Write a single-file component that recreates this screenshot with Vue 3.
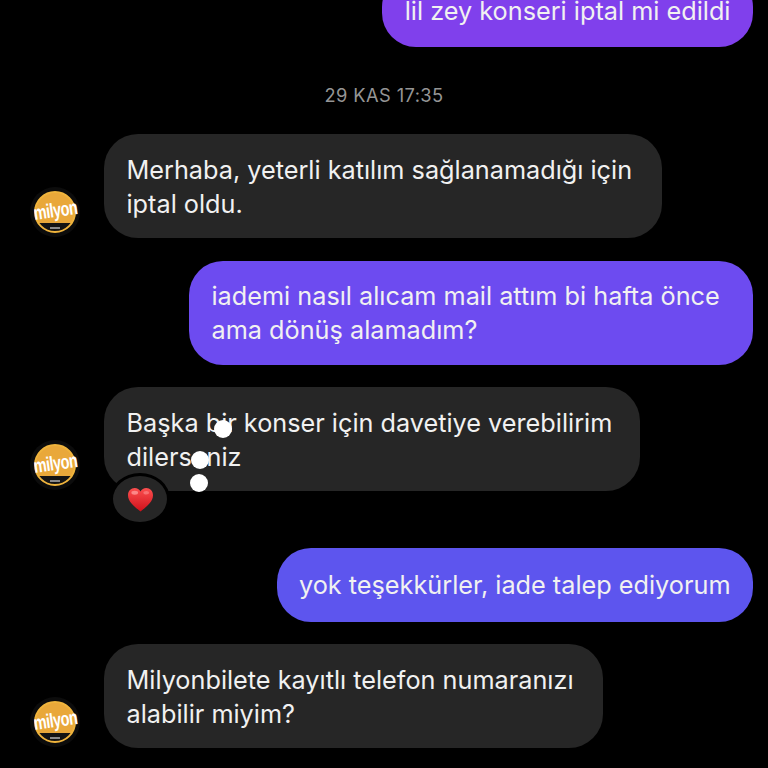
<script setup>
const messages = [
  { id: 1, mine: true, text: 'lil zey konseri iptal mi edildi', color: '#8040ec', cls: 'first' },
  { id: 2, time: '29 KAS 17:35' },
  { id: 3, mine: false, text: 'Merhaba, yeterli katılım sağlanamadığı için iptal oldu.', width: '558px' },
  { id: 4, mine: true, text: 'iademi nasıl alıcam mail attım bi hafta önce ama dönüş alamadım?', color: '#6d4bf0', width: '564px' },
  { id: 5, mine: false, text: 'Başka bir konser için davetiye verebilirim dilerseniz', width: '536px', reaction: true },
  { id: 6, mine: true, text: 'yok teşekkürler, iade talep ediyorum', color: '#5d55ee', cls: 'spaced' },
  { id: 7, mine: false, text: 'Milyonbilete kayıtlı telefon numaranızı alabilir miyim?', width: '499px' }
]
</script>

<template>
  <main class="chat">
    <template v-for="m in messages" :key="m.id">
      <div v-if="m.time" class="time">{{ m.time }}</div>
      <div v-else class="row" :class="[m.mine ? 'mine' : 'theirs', m.cls]">
        <div v-if="!m.mine" class="avatar">
          <div class="disc">
            <span class="brand">milyon</span>
            <span class="mark"></span>
          </div>
        </div>
        <div class="bubble" :style="{ background: m.color, width: m.width }">
          <span>{{ m.text }}</span>
          <div v-if="m.reaction" class="reaction">
            <svg width="27" height="25" viewBox="0 0 28 26">
              <defs>
                <linearGradient id="heart" x1="0" y1="0" x2="0" y2="1">
                  <stop offset="0" stop-color="#fb4f4f" />
                  <stop offset="1" stop-color="#d0101a" />
                </linearGradient>
              </defs>
              <path fill="url(#heart)" d="M14 25.500C8 20.500 1 15.500 1 8.500 1 4.200 4.200 1 8 1c2.600 0 4.800 1.400 6 3.800C15.200 2.400 17.400 1 20 1c3.800 0 7 3.200 7 7.500 0 7-7 12-13 17z" />
              <ellipse cx="8" cy="6" rx="3.500" ry="2" fill="#ff9f9f" opacity=".75" />
              <ellipse cx="20" cy="6" rx="3" ry="1.800" fill="#ff9f9f" opacity=".5" />
            </svg>
          </div>
        </div>
      </div>
    </template>
    <span class="dot d1"></span>
    <span class="dot d2"></span>
    <span class="dot d3"></span>
  </main>
</template>

<style>
html, body { margin: 0; background: #000; }
</style>

<style scoped>
.chat {
  position: relative;
  width: 768px;
  height: 768px;
  overflow: hidden;
  background: #000;
  font-family: Inter, "Liberation Sans", sans-serif;
  display: flex;
  flex-direction: column;
}
.row { display: flex; align-items: flex-end; margin-bottom: 22.500px; flex-shrink: 0; }
.mine { justify-content: flex-end; padding-right: 15px; }
.theirs { padding-left: 30px; gap: 24px; }
.first { margin-top: -27px; margin-bottom: 0; }
.spaced { margin-top: 34px; }
.bubble {
  position: relative;
  box-sizing: border-box;
  min-height: 74px;
  padding: 18.500px 22.500px 17.500px;
  border-radius: 34px;
  background: #262626;
  color: #f1f1f1;
  font-size: 25.250px;
  line-height: 34px;
  display: flex;
  align-items: center;
}
.time {
  margin: 37px 0 28px;
  text-align: center;
  font-size: 18.300px;
  line-height: 22px;
  letter-spacing: .4px;
  color: #959595;
  flex-shrink: 0;
}
.avatar {
  width: 50px;
  height: 50px;
  margin-bottom: 1px;
  border-radius: 50%;
  background: #0c0c0c;
  display: flex;
  align-items: center;
  justify-content: center;
  flex-shrink: 0;
}
.disc {
  position: relative;
  width: 42px;
  height: 42px;
  box-sizing: border-box;
  border: 2px solid #f0b43c;
  border-radius: 50%;
  background: linear-gradient(#e9a83a 0 78%, #141414 78%);
  display: flex;
  align-items: center;
  justify-content: center;
}
.brand {
  font-family: "Liberation Sans", sans-serif;
  font-weight: 700;
  font-size: 20px;
  letter-spacing: -.6px;
  color: #fff;
  transform: rotate(-8deg) scaleX(.72);
  white-space: nowrap;
  margin-top: -3px;
}
.mark {
  position: absolute;
  left: 14px;
  bottom: 2px;
  width: 10px;
  height: 2px;
  background: #8a8a8a;
}
.reaction {
  position: absolute;
  left: 6px;
  bottom: -34px;
  width: 60px;
  height: 52px;
  box-sizing: border-box;
  border: 3px solid #000;
  border-radius: 50%;
  background: #262626;
  display: flex;
  align-items: center;
  justify-content: center;
}
.dot {
  position: absolute;
  width: 18px;
  height: 18px;
  border-radius: 50%;
  background: #fff;
}
.d1 { left: 214px; top: 420px; }
.d2 { left: 191px; top: 451px; }
.d3 { left: 190px; top: 474px; }
</style>
